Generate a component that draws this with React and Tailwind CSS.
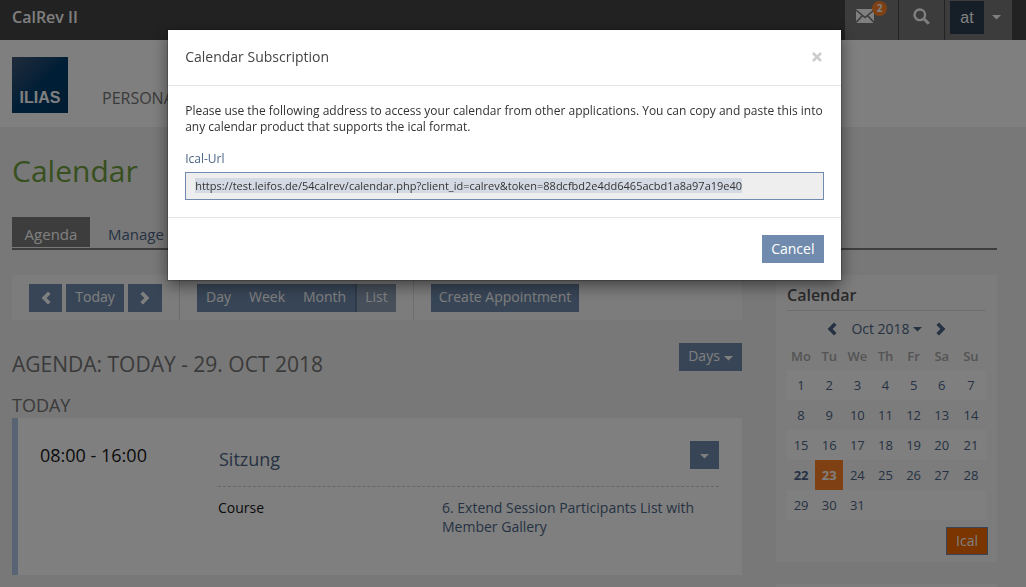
import React, { useEffect, useRef } from 'react';

const weekDays = ['Mo', 'Tu', 'We', 'Th', 'Fr', 'Sa', 'Su'];

const weeks = [
    [1, 2, 3, 4, 5, 6, 7],
    [8, 9, 10, 11, 12, 13, 14],
    [15, 16, 17, 18, 19, 20, 21],
    [22, 23, 24, 25, 26, 27, 28],
    [29, 30, 31, null, null, null, null],
];

const icalUrl = 'https://test.leifos.de/54calrev/calendar.php?client_id=calrev&token=88dcfbd2e4dd6465acbd1a8a97a19e40';

const Caret = () => (
    <svg viewBox="0 0 9 5" className="w-[9px] h-[5px] shrink-0" fill="currentColor" aria-hidden="true">
        <path d="M0 0h9L4.5 4.600z" />
    </svg>
);

const Chevron = ({ left }) => (
    <svg viewBox="0 0 10 14" className={`w-[10px] h-[14px] ${left ? '' : 'rotate-180'}`} fill="currentColor" aria-hidden="true">
        <path d="M7 .6 9.600 3 5.600 7l4 4L7 13.400.600 7z" />
    </svg>
);

const Button = ({ className = '', children, ...rest }) => (
    <button type="button" className={`h-7 flex items-center justify-center whitespace-nowrap bg-[#708bad] text-white text-sm ${className}`} {...rest}>
        {children}
    </button>
);

const TopBar = () => (
    <div className="h-10 bg-[#444444] flex justify-between">
        <div className="pl-3 pt-1 text-base leading-[26px] font-semibold text-white">CalRev II</div>
        <div className="flex mr-[14px] text-white bg-[#787878]">
            <a href="#mail" aria-label="Mail" className="relative w-[54px] border-r border-[#444444]">
                <svg viewBox="0 0 18 14" className="absolute left-[11px] top-[9px] w-[18px] h-[14px]" aria-hidden="true">
                    <path d="M0 0h18v14H0z" fill="#fff" />
                    <path d="M0 1l9 7.5L18 1M0 13.5l6.5-7M18 13.5l-6.500-7" fill="none" stroke="#787878" strokeWidth="1.6" />
                </svg>
                <span className="absolute left-[27px] top-px size-[15px] rounded-full bg-[#ff8228] text-[10px] leading-[15px] font-bold text-center">2</span>
            </a>
            <a href="#search" aria-label="Search" className="w-[46px] border-r border-[#444444] pt-2 pl-[14px]">
                <svg viewBox="0 0 17 17" className="size-[17px]" fill="none" stroke="#fff" aria-hidden="true">
                    <circle cx="6.800" cy="6.800" r="5.300" strokeWidth="2.400" />
                    <path d="M10.800 10.800l5 5" strokeWidth="3" />
                </svg>
            </a>
            <button type="button" className="w-[67px] pl-[5px] pt-px flex items-start">
                <span className="w-[34px] h-[33px] bg-[#2c3c50] font-['Liberation_Sans',sans-serif] text-base leading-[33px]">at</span>
                <span className="pl-2 pt-[14px]"><Caret /></span>
            </button>
        </div>
    </div>
);

const Header = () => (
    <header className="h-[87px] bg-white flex pl-3">
        <div className="mt-[17px] size-14 bg-linear-to-br from-[#3d5878] via-[#003d6b] via-50% to-[#003a66] flex items-end justify-center pb-1">
            <span className="text-white font-bold font-['Liberation_Sans',sans-serif] text-base leading-[22px]">ILIAS</span>
        </div>
        <nav className="pl-[34px] pt-[46px]">
            <a href="#personal" className="text-base leading-6 text-[#757575]">PERSONAL</a>
        </nav>
    </header>
);

const Toolbar = () => (
    <div className="h-[45px] bg-[#f9f9f9] flex items-center">
        <div className="self-stretch flex items-center gap-1 px-[17px] border-r border-[#dddddd]">
            <Button className="w-[33px]" aria-label="Previous"><Chevron left /></Button>
            <Button className="w-[58px] pb-[2px]">Today</Button>
            <Button className="w-[34px]" aria-label="Next"><Chevron /></Button>
        </div>
        <div className="self-stretch flex items-center px-[17px] border-r border-[#dddddd]">
            <Button className="w-[43px] pb-[2px]">Day</Button>
            <Button className="w-[54px] pb-[2px]">Week</Button>
            <Button className="w-[61px] pb-[2px]">Month</Button>
            <Button className="w-[41px] pb-[2px] bg-[#8c9eb4]! border-l-2 border-[#5d7697]">List</Button>
        </div>
        <Button className="ml-[17px] w-[148px] pb-[2px]">Create Appointment</Button>
    </div>
);

const Appointment = () => (
    <article className="h-[157px] bg-white border-l-6 border-[#b0c8e6] flex pl-[22px] pr-[23px]">
        <div className="w-[178px] shrink-0 pt-6 text-lg leading-[26px] text-[#161616]">08:00 - 16:00</div>
        <div className="flex-1">
            <div className="h-[69px] pt-[23px] flex justify-between border-b border-dashed border-[#cccccc]">
                <a href="#sitzung" className="pl-px pt-1 text-lg leading-[28px] text-[#4c6586]">Sitzung</a>
                <Button className="w-[29px] pt-[2px]" aria-label="Actions"><Caret /></Button>
            </div>
            <dl className="flex pt-[11px] text-sm leading-[19px]">
                <dt className="w-[224px] shrink-0 text-[#161616]">Course</dt>
                <dd>
                    <a href="#course" className="text-[#4c6586]">6. Extend Session Participants List with Member Gallery</a>
                </dd>
            </dl>
        </div>
    </article>
);

const dayClass = (day) => {
    if (day === 23) return 'bg-[#ff8228] text-white font-bold';
    if (day === 22) return 'text-[#4c6586] font-bold';
    return 'text-[#4c6586]';
};

const MiniCalendar = () => (
    <section className="h-[287px] bg-[#f9f9f9] px-[11px]">
        <h2 className="h-9 pt-2 text-base leading-6 font-semibold text-[#555555] border-b border-[#dddddd]">Calendar</h2>
        <div className="h-[35px] flex items-center justify-center gap-[14px] text-[#4c6586]">
            <button type="button" aria-label="Previous month"><Chevron left /></button>
            <button type="button" className="flex items-center gap-[3px] text-sm">Oct 2018 <span className="pt-[2px]"><Caret /></span></button>
            <button type="button" aria-label="Next month"><Chevron /></button>
        </div>
        <table className="w-full table-fixed text-[13px] leading-5 text-center">
            <thead>
                <tr className="h-6">
                    {weekDays.map((d) => (
                        <th key={d} className="w-7 p-0 pb-1 font-semibold text-[#a8a8a8] last:w-[30px]">{d}</th>
                    ))}
                </tr>
            </thead>
            <tbody>
                {weeks.map((week, i) => (
                    <tr key={i} className="h-[30px] odd:bg-white">
                        {week.map((day, j) => (
                            <td key={j} className={`p-0 ${dayClass(day)}`}>
                                {day && <a href={`#day-${day}`}>{day}</a>}
                            </td>
                        ))}
                    </tr>
                ))}
            </tbody>
        </table>
        <div className="flex justify-end pt-[7px] -mr-[2px]">
            <Button className="w-[42px] bg-[#f46a00]! border border-[#708bad]">Ical</Button>
        </div>
    </section>
);

const SubscriptionModal = () => {
    const urlRef = useRef(null);

    // preselect the address so it can be copied right away
    useEffect(() => {
        urlRef.current.focus();
        urlRef.current.select();
    }, []);

    return (
        <div className="fixed inset-0 bg-black/50 pr-[17px] pt-[30px] flex items-start justify-center">
            <div role="dialog" aria-modal="true" aria-labelledby="modal-title" className="w-2/3 bg-white shadow-[0_5px_15px_rgba(0,0,0,0.5),0_0_0_1px_rgba(0,0,0,0.2)]">
                <div className="flex items-center justify-between h-14 px-[17px] pb-px border-b border-[#e5e5e5]">
                    <h4 id="modal-title" className="text-sm text-[#444444]">Calendar Subscription</h4>
                    <button type="button" aria-label="Close" className="pr-[2px] text-[#cccccc]">
                        <svg viewBox="0 0 10 10" className="size-[10px]" fill="none" stroke="currentColor" strokeWidth="2.500" aria-hidden="true">
                            <path d="M1 1l8 8M9 1L1 9" />
                        </svg>
                    </button>
                </div>
                <div className="px-[17px] pt-[17px] pb-[17px] text-xs leading-4 text-[#333333]">
                    <p>Please use the following address to access your calendar from other applications. You can copy and paste this into any calendar product that supports the ical format.</p>
                    <label htmlFor="ical-url" className="block pt-4 pb-[5px] text-[#4c6586]">Ical-Url</label>
                    <input
                        id="ical-url"
                        ref={urlRef}
                        readOnly
                        value={icalUrl}
                        className="block w-full h-7 px-[9px] pb-px border border-[#708bad] bg-[#eeeeee] text-[11px] text-[#333333] outline-none selection:bg-[#d4dae4] selection:text-[#333333]"
                    />
                </div>
                <div className="flex justify-end px-[17px] py-[17px] border-t border-[#e5e5e5]">
                    <Button className="w-[62px]">Cancel</Button>
                </div>
            </div>
        </div>
    );
};

const App = () => (
    <div className="h-screen overflow-hidden bg-[#f0f0f0] font-['Open_Sans',sans-serif]">
        <TopBar />
        <Header />
        <main className="pl-3 pr-[29px]">
            <h1 className="pt-6 text-[30px] leading-10 text-[#6ea03c]">Calendar</h1>
            <nav className="mt-[26px] flex border-b-2 border-[#7a7a7a] text-[15px] leading-5">
                <a href="#agenda" className="h-[30px] w-[78px] text-center pt-[7px] mb-px bg-[#7a7a7a] text-white">Agenda</a>
                <a href="#manage" className="px-[18px] pt-[7px] text-[#4c6586]">Manage</a>
            </nav>
            <div className="pt-[25px] flex items-start gap-[34px]">
                <div className="flex-1">
                    <Toolbar />
                    <div className="pt-[23px] flex justify-between">
                        <h2 className="pt-[6px] text-[21px] leading-[30px] text-[#757575]">AGENDA: TODAY - 29. OCT 2018</h2>
                        <Button className="w-[63px] pb-[2px] gap-1">Days <span className="pt-1"><Caret /></span></Button>
                    </div>
                    <h3 className="pt-[13px] text-lg leading-[26px] text-[#757575]">TODAY</h3>
                    <Appointment />
                </div>
                <aside className="w-[221px] shrink-0 flex flex-col gap-[22px]">
                    <MiniCalendar />
                    <section className="h-24 bg-[#f9f9f9]" />
                </aside>
            </div>
        </main>
        <SubscriptionModal />
    </div>
);

export default App;
